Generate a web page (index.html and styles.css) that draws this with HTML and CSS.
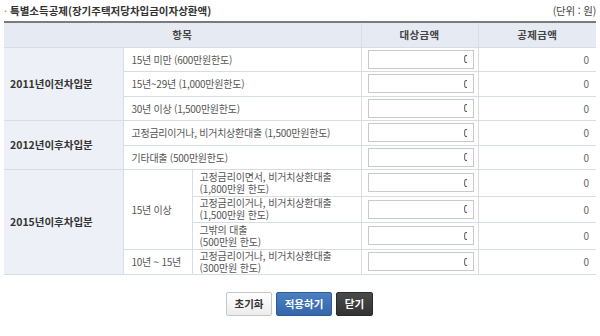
FILE: index.html
```html
<!DOCTYPE html>
<html lang="ko">
<head>
<meta charset="utf-8">
<link rel="stylesheet" href="styles.css">
</head>
<body>
<div class="wrap">
  <div class="titlebar">
    <h2 class="title"><span class="bullet">·</span>특별소득공제(장기주택저당차입금이자상환액)</h2>
    <span class="unit">(단위 : 원)</span>
  </div>
  <table class="grid">
    <colgroup><col class="c1"><col class="c2a"><col class="c2b"><col class="c3"><col class="c4"></colgroup>
    <thead>
      <tr><th colspan="3">항목</th><th>대상금액</th><th>공제금액</th></tr>
    </thead>
    <tbody>
      <tr class="r1"><th rowspan="3" class="grp">2011년이전차입분</th><td colspan="2" class="lbl">15년 미만 (600만원한도)</td><td class="in"><div class="box"><span class="v">0</span></div></td><td class="amt">0</td></tr>
      <tr class="r2"><td colspan="2" class="lbl">15년~29년 (1,000만원한도)</td><td class="in"><div class="box"><span class="v">0</span></div></td><td class="amt">0</td></tr>
      <tr class="r1"><td colspan="2" class="lbl">30년 이상 (1,500만원한도)</td><td class="in"><div class="box"><span class="v">0</span></div></td><td class="amt">0</td></tr>
      <tr class="r2"><th rowspan="2" class="grp">2012년이후차입분</th><td colspan="2" class="lbl">고정금리이거나, 비거치상환대출 (1,500만원한도)</td><td class="in"><div class="box"><span class="v">0</span></div></td><td class="amt">0</td></tr>
      <tr class="r1"><td colspan="2" class="lbl">기타대출 (500만원한도)</td><td class="in"><div class="box"><span class="v">0</span></div></td><td class="amt">0</td></tr>
      <tr class="r3"><th rowspan="4" class="grp">2015년이후차입분</th><td rowspan="3" class="lbl">15년 이상</td><td class="two">고정금리이면서, 비거치상환대출<br>(1,800만원 한도)</td><td class="in"><div class="box"><span class="v">0</span></div></td><td class="amt">0</td></tr>
      <tr class="r4"><td class="two">고정금리이거나, 비거치상환대출<br>(1,500만원 한도)</td><td class="in"><div class="box"><span class="v">0</span></div></td><td class="amt">0</td></tr>
      <tr class="r3"><td class="two">그밖의 대출<br>(500만원 한도)</td><td class="in"><div class="box"><span class="v">0</span></div></td><td class="amt">0</td></tr>
      <tr class="r2"><td class="lbl">10년 ~ 15년</td><td class="two">고정금리이거나, 비거치상환대출<br>(300만원 한도)</td><td class="in"><div class="box"><span class="v">0</span></div></td><td class="amt">0</td></tr>
    </tbody>
  </table>
  <div class="actions">
    <button class="btn light">초기화</button>
    <button class="btn blue">적용하기</button>
    <button class="btn dark">닫기</button>
  </div>
</div>
</body>
</html>
```
FILE: styles.css
```css
* { box-sizing: border-box; }
html, body { margin: 0; padding: 0; background: #fff; }
body {
  font-family: "Noto Sans CJK KR", "Noto Sans", sans-serif;
  font-size: 10px;
  color: #555;
}
.wrap { padding: 0 4px; width: 600px; }
.titlebar {
  height: 21px;
  display: flex;
  align-items: center;
  justify-content: space-between;
}
.title {
  margin: 0;
  font-size: 10.5px;
  font-weight: bold;
  color: #333;
  display: flex;
  align-items: center;
}
.bullet { color: #888; font-weight: normal; width: 6px; }
.unit { font-size: 10.5px; color: #444; letter-spacing: -0.2px; }

.grid {
  width: 592px;
  border-collapse: collapse;
  table-layout: fixed;
  border-top: 2px solid #7b7b7b;
  border-bottom: 1px solid #d7dde6;
}
.c1 { width: 119px; }
.c2a { width: 69px; }
.c2b { width: 169px; }
.c3 { width: 117px; }
.c4 { width: 118px; }

.grid th, .grid td {
  border: 1px solid #d7dde6;
  padding: 0;
  vertical-align: middle;
}
.grid tr > :first-child { border-left: none; }
.grid tr > :last-child { border-right: none; }
.grid tbody tr > .grp { border-left: none; }
.grid thead th {
  height: 25px;
  background: #e6ebf3;
  color: #444;
  font-weight: bold;
  font-size: 10.5px;
  letter-spacing: 0.3px;
  text-align: center;
  border-top: none;
}
.grid .grp {
  background: #edf0f6;
  color: #333;
  font-weight: bold;
  font-size: 10.5px;
  text-align: left;
  padding-left: 6px;
}
.r1 { height: 24px; }
.r2 { height: 25px; }
.r3 { height: 27px; }
.r4 { height: 26px; }
.lbl {
  padding-left: 8px !important;
  letter-spacing: -0.25px;
  white-space: nowrap;
}
.two {
  padding: 0 0 0 7px !important;
  line-height: 12px;
  letter-spacing: -0.15px;
  white-space: nowrap;
}
.in { padding: 0 5px 0 6px !important; }
.box {
  width: 106px;
  height: 19px;
  border: 1px solid #c9c9c9;
  background: #fff;
  display: flex;
  align-items: center;
  justify-content: flex-end;
  padding-right: 6px;
}
.v {
  display: inline-block;
  width: 3px;
  overflow: hidden;
  color: #444;
  font-size: 10px;
  line-height: 12px;
}
.amt {
  text-align: right;
  padding-right: 7px !important;
  color: #666;
}

.actions {
  display: flex;
  justify-content: center;
  gap: 4px;
  margin-top: 17px;
  padding-right: 1px;
}
.btn {
  height: 24px;
  border-radius: 2px;
  font-family: "Noto Sans CJK KR", "Noto Sans", sans-serif;
  font-size: 10.5px;
  font-weight: bold;
  padding: 0;
  cursor: pointer;
}
.btn.light {
  width: 46px;
  background: linear-gradient(#ffffff, #ececec);
  border: 1px solid #c6c6c6;
  color: #333;
}
.btn.blue {
  width: 56px;
  background: linear-gradient(#4a7fc2, #3566aa);
  border: 1px solid #2d5b99;
  color: #fff;
}
.btn.dark {
  width: 37px;
  background: linear-gradient(#4a4a4a, #333333);
  border: 1px solid #2a2a2a;
  color: #fff;
}
```
